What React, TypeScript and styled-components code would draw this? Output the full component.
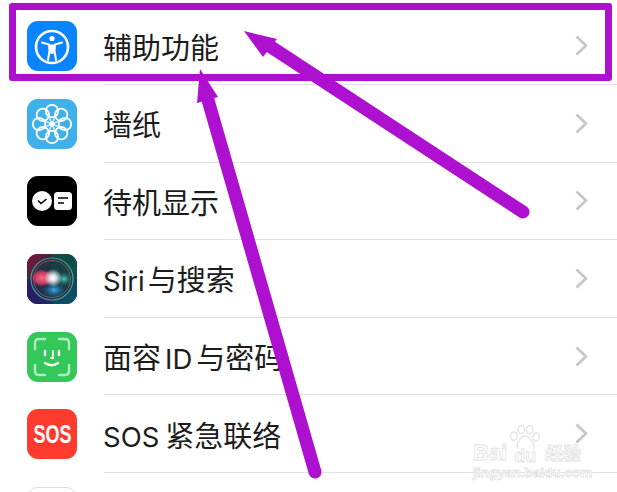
import React from 'react'
import styled, { createGlobalStyle } from 'styled-components'

const GlobalStyle = createGlobalStyle`
  html, body {
    margin: 0;
    padding: 0;
    background: #fff;
  }
`

const Page = styled.div`
  position: relative;
  width: 617px;
  height: 492px;
  overflow: hidden;
  background: #fff;
  font-family: Inter, "Noto Sans CJK SC", sans-serif;
`

const List = styled.ul`
  list-style: none;
  margin: 0;
  padding: 7.5px 0 0 27px;
`

const Row = styled.li`
  display: flex;
  align-items: center;
  gap: 27px;
  height: 77.6px;
`

const IconTile = styled.div<{ $bg: string; $outlined?: boolean }>`
  flex: none;
  width: 50px;
  height: 50px;
  border-radius: 11px;
  overflow: hidden;
  display: flex;
  align-items: center;
  justify-content: center;
  box-sizing: border-box;
  background: ${p => p.$bg};
  border: ${p => (p.$outlined ? '1px solid #ddd' : 'none')};
  svg {
    display: block;
  }
`

const SosMark = styled.span`
  font-family: "Liberation Sans", sans-serif;
  font-weight: 700;
  font-size: 25px;
  color: #fff;
  transform: scaleX(0.72);
`

const RowBody = styled.div`
  flex: 1;
  align-self: stretch;
  display: flex;
  align-items: center;
  justify-content: space-between;
  padding-right: 29px;
  border-bottom: 1px solid #e2e2e2;
`

const Label = styled.span`
  padding-top: 5px;
  font-size: 29px;
  line-height: 1;
  color: #1c1c1c;
  margin-left: -1px;
`

const Latin = styled.span<{ $before?: number; $after?: number }>`
  font-size: 27.5px;
  margin-left: ${p => p.$before ?? 0}px;
  margin-right: ${p => p.$after ?? 0}px;
`

const Frame = styled.div`
  position: absolute;
  left: 9px;
  top: 3px;
  width: 603px;
  height: 78px;
  box-sizing: border-box;
  border: 7px solid #ae10d0;
  border-radius: 3px;
`

const Arrows = styled.svg`
  position: absolute;
  left: 0;
  top: 0;
`

const Watermark = styled.div`
  position: absolute;
  left: 473px;
  top: 425px;
  display: flex;
  flex-direction: column;
  gap: 3px;
  color: #fff;
  font-family: "Liberation Sans", sans-serif;
  font-weight: 700;
  white-space: nowrap;
  -webkit-text-stroke: 0.8px #e2e2e2;
`

const WatermarkTop = styled.div`
  display: flex;
  align-items: flex-end;
  gap: 2px;
`

const WatermarkBai = styled.span`
  font-size: 22px;
  line-height: 21px;
`

const WatermarkPawColumn = styled.div`
  display: flex;
  flex-direction: column;
  align-items: center;
  width: 32px;
`

const WatermarkDu = styled.span`
  font-size: 18px;
  line-height: 14px;
`

const WatermarkCn = styled.span`
  font-family: "Noto Sans CJK SC", sans-serif;
  font-size: 18px;
  line-height: 21px;
  margin-left: 2px;
`

const WatermarkUrl = styled.span`
  font-size: 13.6px;
  line-height: 13px;
`

const Chevron = () => (
  <svg width="13" height="21" viewBox="0 0 13 21" fill="none">
    <path d="M1.5 1.5 L11 10.5 L1.5 19.5" stroke="#c6c6c8" strokeWidth="2.6" />
  </svg>
)

const AccessibilityGlyph = () => (
  <svg width="50" height="50" viewBox="0 0 50 50" fill="none">
    <circle cx="25" cy="26" r="16" stroke="#fff" strokeWidth="2.6" />
    <circle cx="25" cy="17.5" r="2.6" fill="#fff" />
    <path d="M15 21.5 L22 23.5 L22.5 30 L21 39 M35 21.5 L28 23.5 L27.5 30 L29 39" stroke="#fff" strokeWidth="2" strokeLinecap="round" />
    <path d="M22 23.5 H28 V30 L26 33 H24 L22 30 Z" fill="#fff" />
  </svg>
)

const FlowerGlyph = () => (
  <svg width="50" height="50" viewBox="0 0 50 50" fill="none" stroke="#fff">
    {[0, 45, 90, 135, 180, 225, 270, 315].map(a => (
      <g key={a} transform={`rotate(${a} 25 25)`}>
        <circle cx="25" cy="12" r="6.2" strokeWidth="1.8" />
        <path d="M25 25 L22 15 M25 25 L28 15" strokeWidth="0.7" />
      </g>
    ))}
    <circle cx="25" cy="25" r="2.6" fill="#fff" stroke="none" />
  </svg>
)

const StandbyGlyph = () => (
  <svg width="50" height="50" viewBox="0 0 50 50" fill="none">
    <circle cx="15" cy="25" r="10" fill="#fff" />
    <path d="M11 24.5 L14 27.5 L19.5 23" stroke="#000" strokeWidth="1.5" />
    <rect x="27" y="16" width="18" height="18" rx="3.5" fill="#fff" />
    <path d="M31 22 H41 M31 27 H37" stroke="#000" strokeWidth="1.5" />
  </svg>
)

const SiriGlyph = () => (
  <svg width="50" height="50" viewBox="0 0 50 50" fill="none">
    <defs>
      <radialGradient id="siriCore">
        <stop offset="0%" stopColor="#fff" />
        <stop offset="35%" stopColor="#f0f4ff" stopOpacity="0.9" />
        <stop offset="100%" stopColor="#fff" stopOpacity="0" />
      </radialGradient>
      <radialGradient id="siriRed">
        <stop offset="0%" stopColor="#ff6c84" />
        <stop offset="70%" stopColor="#d03a62" stopOpacity="0.85" />
        <stop offset="100%" stopColor="#8e1d46" stopOpacity="0" />
      </radialGradient>
      <radialGradient id="siriBlue">
        <stop offset="0%" stopColor="#3fb0f0" />
        <stop offset="100%" stopColor="#135c86" stopOpacity="0" />
      </radialGradient>
      <radialGradient id="siriGreen">
        <stop offset="0%" stopColor="#4fd0b8" />
        <stop offset="100%" stopColor="#12594f" stopOpacity="0" />
      </radialGradient>
      <linearGradient id="siriBack" x1="0" y1="0" x2="1" y2="1">
        <stop offset="0%" stopColor="#8a1238" />
        <stop offset="45%" stopColor="#15304a" />
        <stop offset="100%" stopColor="#0a5a70" />
      </linearGradient>
    </defs>
    <rect width="50" height="50" fill="url(#siriBack)" />
    <rect x="25" width="25" height="25" fill="#0c5248" opacity="0.8" />
    <rect y="25" width="25" height="25" fill="#2a1a6e" opacity="0.7" />
    <circle cx="25" cy="25" r="21" fill="#1a3a44" opacity="0.7" />
    <circle cx="25" cy="25" r="21" stroke="#5cc3a6" strokeOpacity="0.75" strokeWidth="1.2" />
    <circle cx="25" cy="25" r="18.5" stroke="#e0607c" strokeOpacity="0.6" strokeWidth="1" />
    <ellipse cx="37" cy="25" rx="9" ry="8" fill="url(#siriGreen)" />
    <ellipse cx="27" cy="36" rx="12" ry="8" fill="url(#siriBlue)" />
    <ellipse cx="15" cy="24" rx="11" ry="9" fill="url(#siriRed)" />
    <circle cx="26" cy="24" r="9" fill="url(#siriCore)" />
  </svg>
)

const FaceGlyph = () => (
  <svg width="50" height="50" viewBox="0 0 50 50" fill="none">
    <g stroke="#b5ebc2" strokeWidth="2.4" strokeLinecap="round">
      <path d="M8 17 V11 Q8 7 12 7 H18" />
      <path d="M32 7 H38 Q42 7 42 11 V17" />
      <path d="M8 33 V39 Q8 43 12 43 H18" />
      <path d="M32 43 H38 Q42 43 42 39 V33" />
    </g>
    <g stroke="#fff" strokeWidth="2.4" strokeLinecap="round">
      <path d="M18 19 V23 M32 19 V23" />
      <path d="M26 19 V26 H24" strokeWidth="1.8" />
      <path d="M18 31 Q24.5 35.5 31 31" />
    </g>
  </svg>
)

const PawGlyph = () => (
  <svg width="32" height="24" viewBox="0 0 34 26" fill="none" stroke="#e2e2e2" strokeWidth="1.4">
    <ellipse cx="5" cy="12" rx="3.5" ry="4.5" />
    <ellipse cx="13" cy="5" rx="3.5" ry="4.5" />
    <ellipse cx="22" cy="5" rx="3.5" ry="4.5" />
    <ellipse cx="29" cy="13" rx="3.5" ry="4.5" />
    <path d="M17 12 C12 12 7 20 9 26 M17 12 C22 12 28 20 26 26" />
  </svg>
)

type Setting = {
  id: string
  label: React.ReactNode
  bg: string
  icon: React.ReactNode
}

const settings: Setting[] = [
  { id: 'accessibility', label: '辅助功能', bg: '#0a84ff', icon: <AccessibilityGlyph /> },
  { id: 'wallpaper', label: '墙纸', bg: '#3fb0ea', icon: <FlowerGlyph /> },
  { id: 'standby', label: '待机显示', bg: '#000', icon: <StandbyGlyph /> },
  {
    id: 'siri',
    label: <><Latin $after={3}>Siri</Latin>与搜索</>,
    bg: '#111',
    icon: <SiriGlyph />,
  },
  {
    id: 'faceid',
    label: <>面容<Latin $before={4} $after={4}>ID</Latin>与密码</>,
    bg: '#34c759',
    icon: <FaceGlyph />,
  },
  {
    id: 'sos',
    label: <><Latin $after={6}>SOS</Latin>紧急联络</>,
    bg: '#ff3b30',
    icon: <SosMark>SOS</SosMark>,
  },
]

export default function App() {
  return (
    <Page>
      <GlobalStyle />
      <List>
        {settings.map(item => (
          <Row key={item.id}>
            <IconTile $bg={item.bg}>{item.icon}</IconTile>
            <RowBody>
              <Label>{item.label}</Label>
              <Chevron />
            </RowBody>
          </Row>
        ))}
        <Row>
          <IconTile $bg="#fff" $outlined />
        </Row>
      </List>

      <Watermark>
        <WatermarkTop>
          <WatermarkBai>Bai</WatermarkBai>
          <WatermarkPawColumn>
            <PawGlyph />
            <WatermarkDu>du</WatermarkDu>
          </WatermarkPawColumn>
          <WatermarkCn>经验</WatermarkCn>
        </WatermarkTop>
        <WatermarkUrl>jingyan.baidu.com</WatermarkUrl>
      </Watermark>

      <Frame />
      <Arrows width="617" height="492" viewBox="0 0 617 492" fill="none">
        <path d="M523 212 L268 45" stroke="#ae10d0" strokeWidth="13" strokeLinecap="round" />
        <polygon points="244,31 277,39 263,57" fill="#ae10d0" />
        <path d="M315 472 L208 100" stroke="#ae10d0" strokeWidth="13" strokeLinecap="round" />
        <polygon points="200,69 218,97 197,103" fill="#ae10d0" />
      </Arrows>
    </Page>
  )
}
